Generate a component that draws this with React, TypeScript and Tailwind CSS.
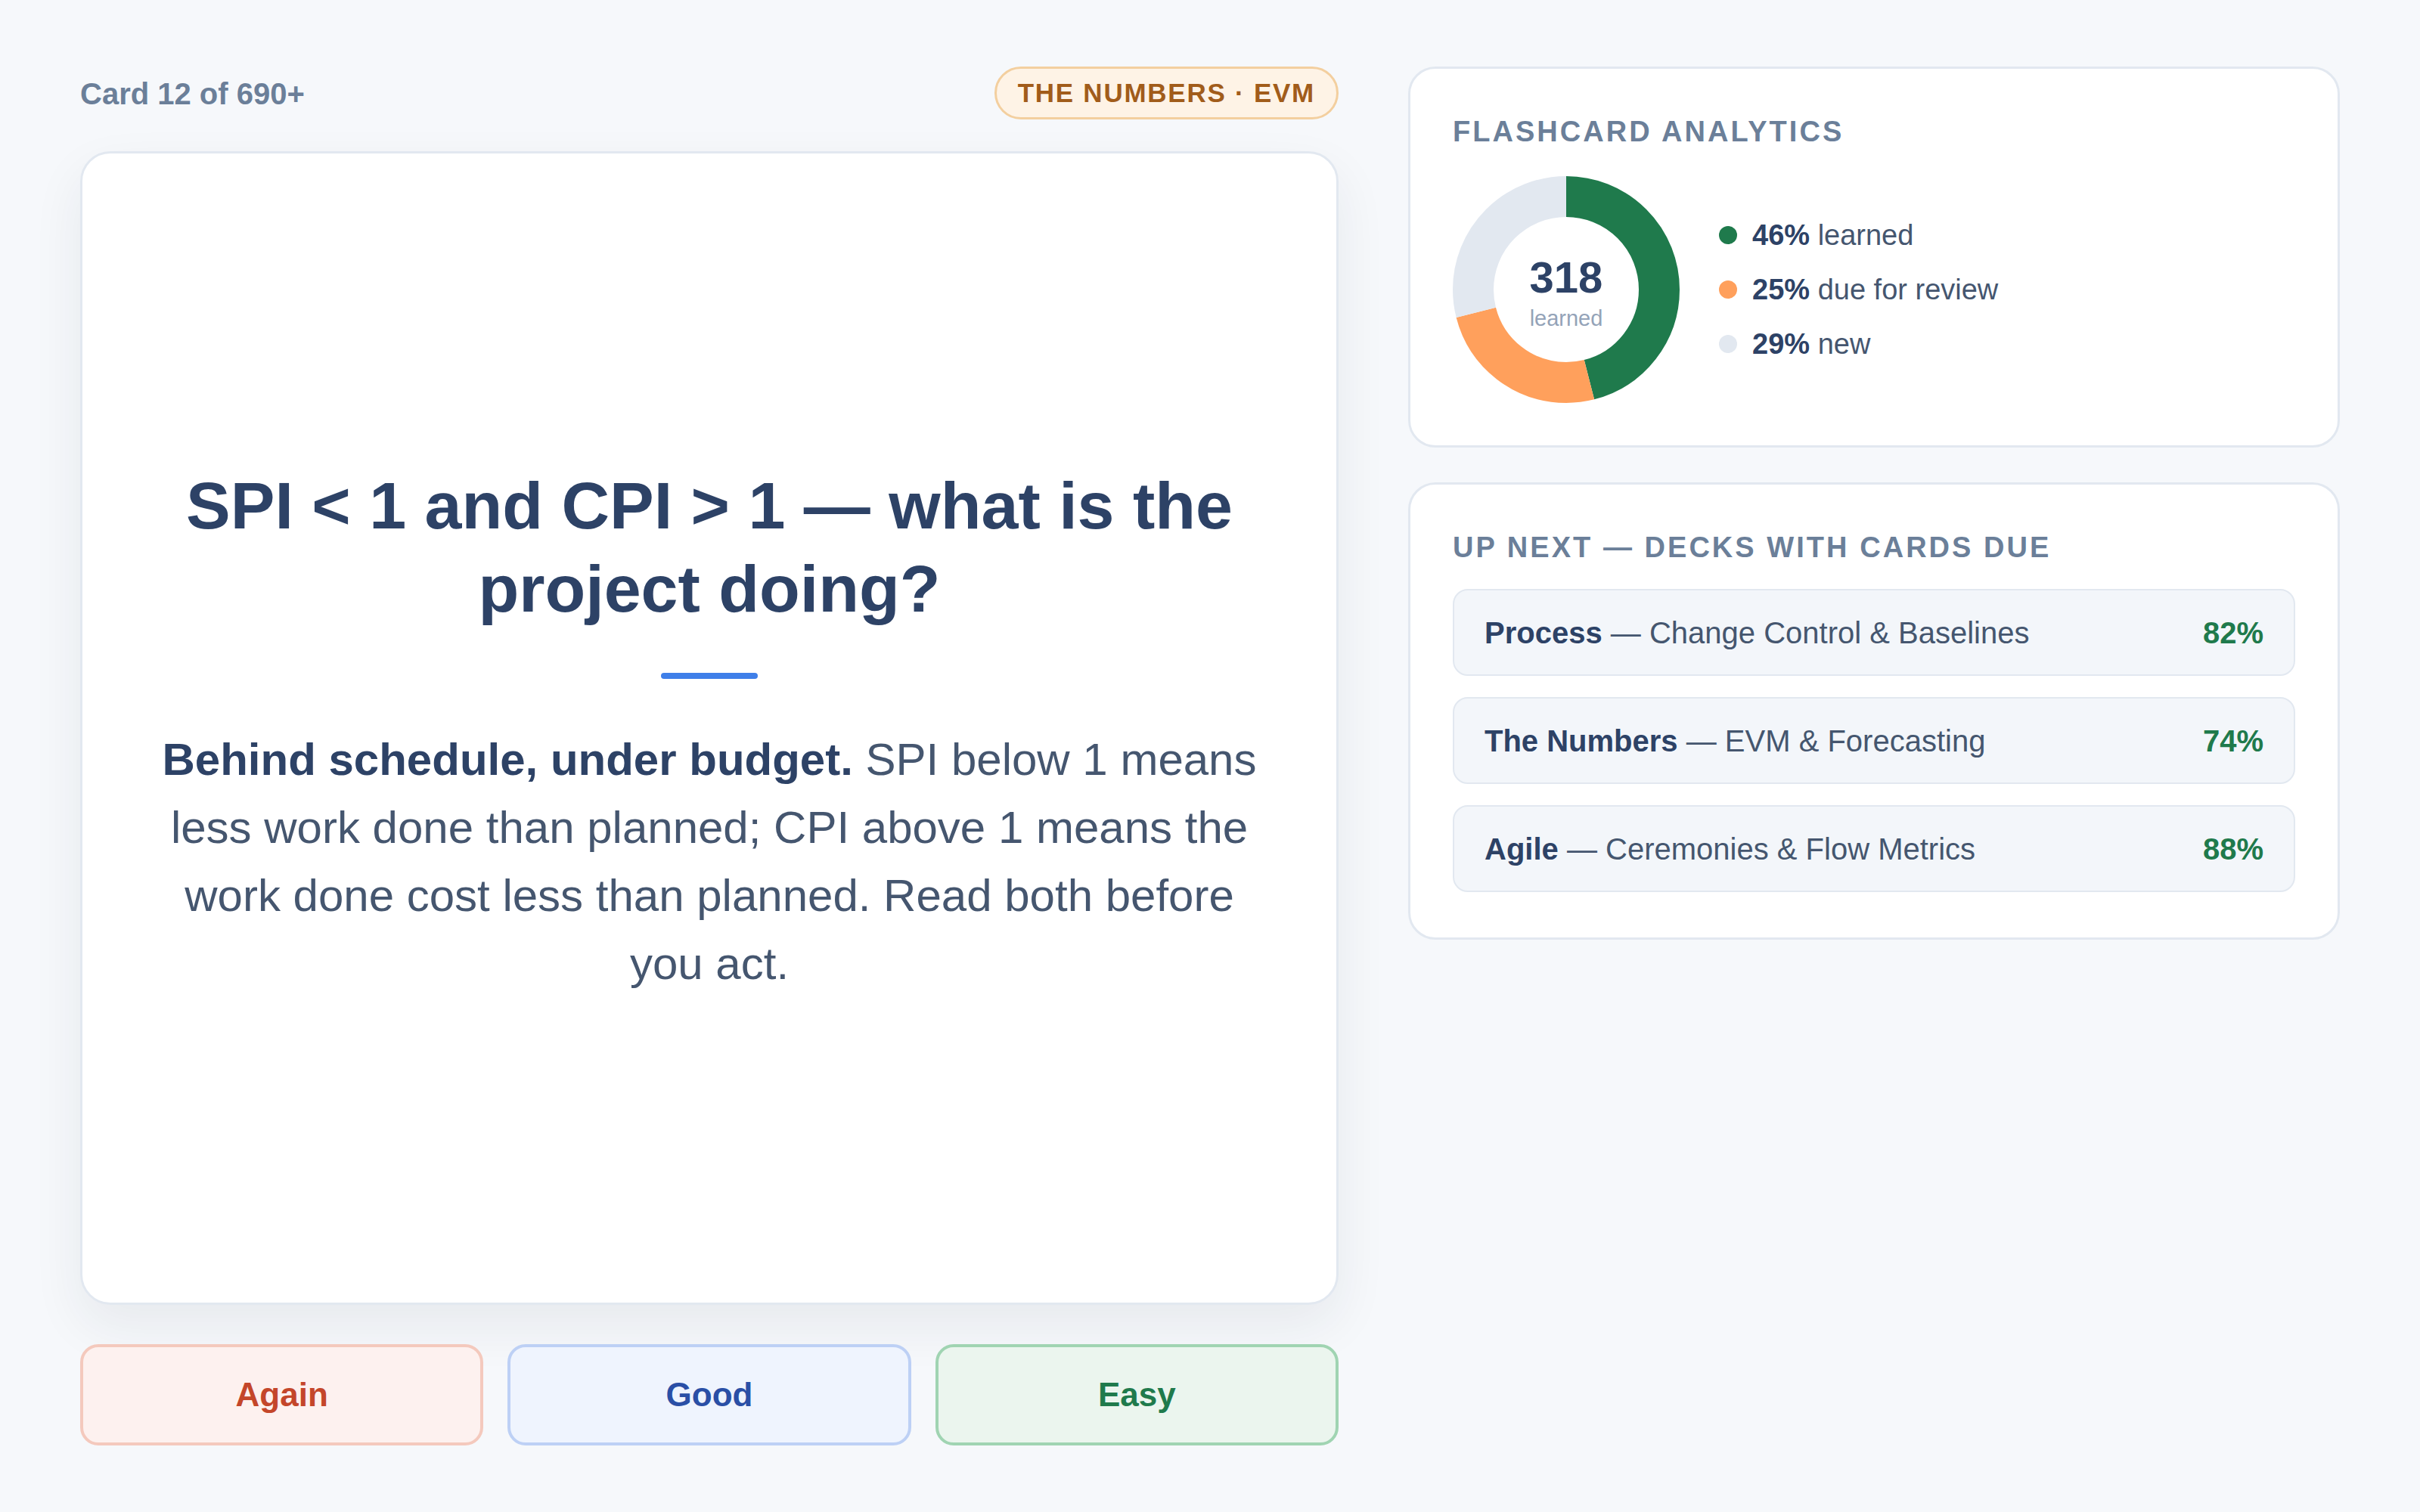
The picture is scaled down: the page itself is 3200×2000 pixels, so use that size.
import React from "react";

const R = 123;
const C = 2 * Math.PI * R;

function Donut() {
  const segs = [
    { pct: 0.46, color: "#1f7a4c" },
    { pct: 0.25, color: "#ffa05c" },
    { pct: 0.29, color: "#e2e8f0" },
  ];
  let acc = 0;
  return (
    <div className="relative h-[300px] w-[300px] shrink-0">
      <svg width="300" height="300" viewBox="0 0 300 300" className="-rotate-90">
        {segs.map((s, i) => {
          const len = s.pct * C;
          const el = (
            <circle
              key={i}
              cx="150"
              cy="150"
              r={R}
              fill="none"
              stroke={s.color}
              strokeWidth="54"
              strokeDasharray={`${len} ${C - len}`}
              strokeDashoffset={-acc}
            />
          );
          acc += len;
          return el;
        })}
      </svg>
      <div className="absolute inset-0 flex flex-col items-center justify-center pt-[8px]">
        <span className="text-[58px] font-bold leading-[64px] text-[#2d4266]">318</span>
        <span className="mt-[4px] text-[29px] leading-[36px] text-[#94a3b8]">learned</span>
      </div>
    </div>
  );
}

function Legend({ color, pct, label }: { color: string; pct: string; label: string }) {
  return (
    <div className="flex items-center gap-[20px] text-[38px] leading-[56px]">
      <span className="h-[24px] w-[24px] rounded-full" style={{ backgroundColor: color }} />
      <span>
        <b className="font-bold text-[#2d4266]">{pct}</b>
        <span className="text-[#45566f]"> {label}</span>
      </span>
    </div>
  );
}

function Deck({ name, rest, pct }: { name: string; rest: string; pct: string }) {
  return (
    <div className="flex h-[115px] items-center justify-between rounded-[20px] border-2 border-[#e2e8f0] bg-[#f3f6fa] px-[40px] text-[40px]">
      <span>
        <b className="font-bold text-[#2d4266]">{name}</b>
        <span className="text-[#45566f]"> — {rest}</span>
      </span>
      <span className="font-bold text-[#1f7a4c]">{pct}</span>
    </div>
  );
}

export default function App() {
  return (
    <div className="min-h-screen bg-[#f6f8fb] font-['Liberation_Sans',Arial,sans-serif]">
      <div className="grid grid-cols-[1664px_1232px] gap-[92px] px-[106px] pt-[88px]">
        <div className="flex flex-col">
          <div className="flex h-[70px] items-center justify-between">
            <span className="pt-[2px] text-[40px] font-bold text-[#6b7f99]">Card 12 of 690+</span>
            <span className="flex h-[70px] items-center rounded-full border-[3px] border-[#f3cf9f] bg-[#fef3e6] px-[28px] text-[35px] font-bold tracking-[0.05em] text-[#a15c1a]">
              THE NUMBERS · EVM
            </span>
          </div>
          <div className="mt-[42px] flex h-[1526px] flex-col items-center justify-center rounded-[40px] border-[3px] border-[#e2e8f0] bg-white px-[96px] pt-[8px] text-center shadow-[0_28px_68px_rgba(30,41,59,0.07)]">
            <h1 className="text-[88px] font-bold leading-[110px] text-[#2d4266]">
              SPI &lt; 1 and CPI &gt; 1 — what is the project doing?
            </h1>
            <div className="mt-[56px] h-[8px] w-[128px] rounded-full bg-[#3f7fe9]" />
            <p className="mt-[62px] text-[60px] leading-[90px] text-[#45566f]">
              <b className="font-bold text-[#2d4266]">Behind schedule, under budget.</b> SPI below 1 means less work done
              than planned; CPI above 1 means the work done cost less than planned. Read both before you act.
            </p>
          </div>
          <div className="mt-[52px] grid grid-cols-3 gap-[32px]">
            <button className="h-[134px] rounded-[24px] border-4 border-[#f4c9bd] bg-[#fdf1ef] text-[44px] font-bold text-[#c4462a]">
              Again
            </button>
            <button className="h-[134px] rounded-[24px] border-4 border-[#bdd0f5] bg-[#eff4fe] text-[44px] font-bold text-[#2a4fa6]">
              Good
            </button>
            <button className="h-[134px] rounded-[24px] border-4 border-[#a0d4b2] bg-[#ebf5ee] text-[44px] font-bold text-[#1f7a4c]">
              Easy
            </button>
          </div>
        </div>

        <div className="flex flex-col gap-[46px]">
          <div className="rounded-[36px] border-[3px] border-[#e2e8f0] bg-white p-[56px]">
            <h2 className="text-[38px] font-bold uppercase leading-[54px] tracking-[0.08em] text-[#6b7f99]">
              Flashcard Analytics
            </h2>
            <div className="mt-[32px] flex items-center gap-[52px]">
              <Donut />
              <div className="flex flex-col gap-[16px]">
                <Legend color="#1f7a4c" pct="46%" label="learned" />
                <Legend color="#ffa05c" pct="25%" label="due for review" />
                <Legend color="#e2e8f0" pct="29%" label="new" />
              </div>
            </div>
          </div>

          <div className="rounded-[36px] border-[3px] border-[#e2e8f0] bg-white px-[56px] pb-[60px] pt-[56px]">
            <h2 className="text-[38px] font-bold uppercase leading-[54px] tracking-[0.08em] text-[#6b7f99]">
              Up Next — Decks With Cards Due
            </h2>
            <div className="mt-[28px] flex flex-col gap-[28px]">
              <Deck name="Process" rest="Change Control & Baselines" pct="82%" />
              <Deck name="The Numbers" rest="EVM & Forecasting" pct="74%" />
              <Deck name="Agile" rest="Ceremonies & Flow Metrics" pct="88%" />
            </div>
          </div>
        </div>
      </div>
    </div>
  );
}
